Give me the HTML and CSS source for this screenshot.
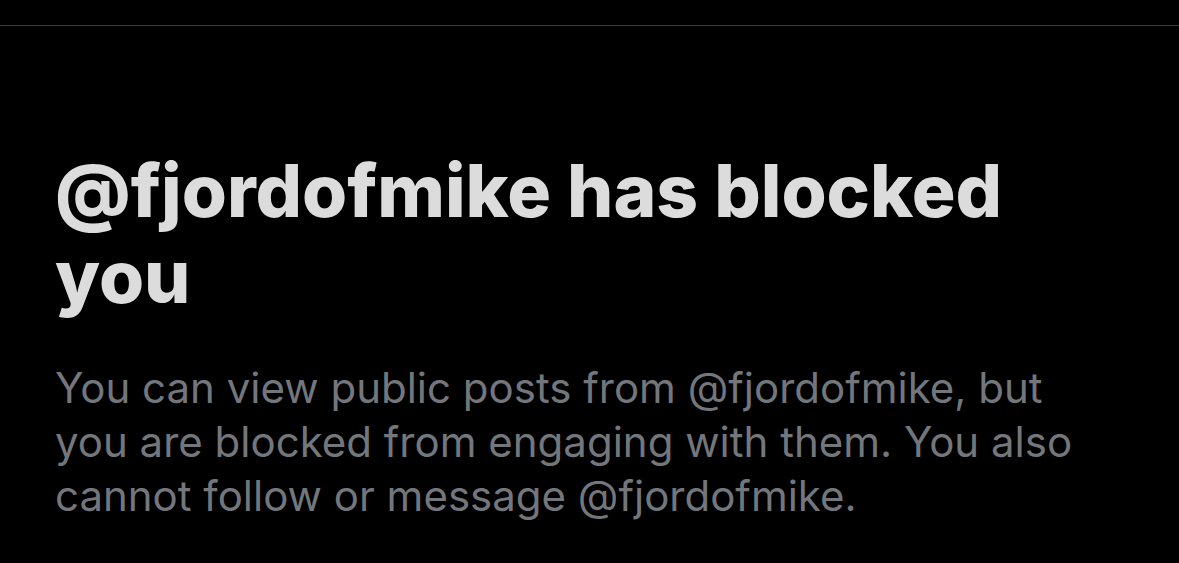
FILE: index.html
```html
<!DOCTYPE html>
<html lang="en">
<head>
    <meta charset="UTF-8">
    <title>Blocked</title>
    <meta name="viewport" content="width=device-width, initial-scale=1">
    <link rel="stylesheet" href="styles.css">
</head>
<body>

<div class="topbar"></div>

<div class="blocked">
    <h2 class="blocked-title">@fjordofmike has blocked you</h2>
    <p class="blocked-text">You can view public posts from @fjordofmike, but you are blocked from engaging with them. You also cannot follow or message @fjordofmike.</p>
</div>

</body>
</html>
```

FILE: styles.css
```css
/* Reset */
* {
    box-sizing: border-box;
    margin: 0;
    padding: 0;
}

body {
    font-family: Inter, 'Noto Sans', sans-serif;
    background: #000;
    color: #e7e9ea;
    min-height: 100vh;
}

.topbar {
    height: 26px;
    border-bottom: 1px solid #3c3c3c;
}

.blocked {
    padding: 122px 72px 0 55px;
}

.blocked-title {
    font-size: 73px;
    font-weight: 800;
    line-height: 86px;
    letter-spacing: 0;
    color: #dcdcdc;
    margin-bottom: 41px;
}

.blocked-text {
    font-size: 42px;
    font-weight: 400;
    line-height: 54px;
    color: #73777c;
}
```
